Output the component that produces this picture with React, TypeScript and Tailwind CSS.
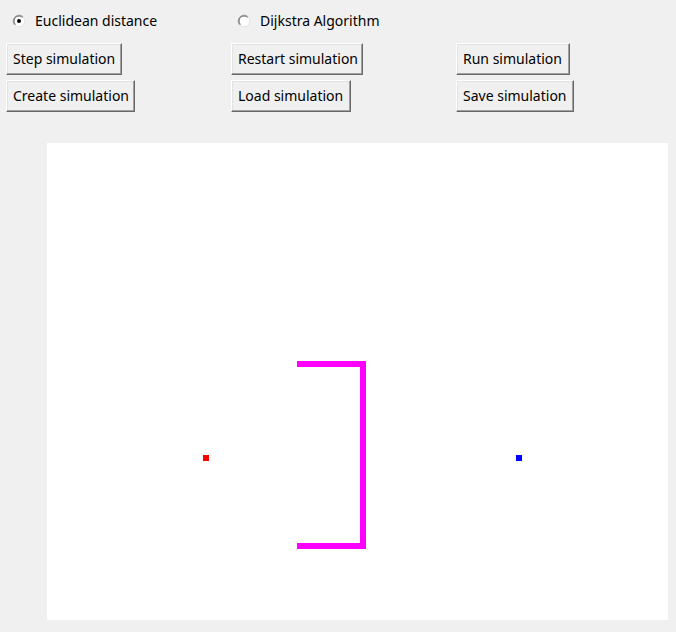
import React from "react";

function Radio({ checked, label }: { checked: boolean; label: string }) {
  return (
    <div className="flex items-center h-[20px]">
      <svg width="14" height="14" viewBox="0 0 14 14" className="ml-[6px] mr-[9px]">
        <circle cx="7" cy="7" r="6" fill="#ffffff" />
        <path d="M2.76 11.24 A6 6 0 0 1 11.24 2.76" fill="none" stroke="#a0a0a0" strokeWidth="1" />
        <path d="M11.24 2.76 A6 6 0 0 1 2.76 11.24" fill="none" stroke="#e3e3e3" strokeWidth="1" />
        <path d="M3.46 10.54 A5 5 0 0 1 10.54 3.46" fill="none" stroke="#696969" strokeWidth="1" />
        {checked && <circle cx="7" cy="7" r="2" fill="#000000" />}
      </svg>
      <span className="text-[14px] text-black leading-none">{label}</span>
    </div>
  );
}

function Btn({ label, w }: { label: string; w: string }) {
  return (
    <button
      className={`${w} h-[32px] bg-[#f0f0f0] text-black text-[14px] text-left pl-[6px] border border-t-white border-l-white border-r-[#696969] border-b-[#696969] shadow-[inset_-1px_-1px_0_#a0a0a0,inset_1px_1px_0_#e3e3e3] leading-none`}
    >
      {label}
    </button>
  );
}

export default function App() {
  return (
    <div
      className="w-[676px] h-[632px] bg-[#f0f0f0] overflow-hidden"
      style={{ fontFamily: '"Noto Sans", "Liberation Sans", sans-serif' }}
    >
      <div className="grid grid-cols-[225px_225px_225px] pl-[6px] pt-[11px]">
        <Radio checked={true} label="Euclidean distance" />
        <Radio checked={false} label="Dijkstra Algorithm" />
        <div />
      </div>
      <div className="grid grid-cols-[225px_225px_225px] pl-[6px] pt-[12px] gap-y-[5px]">
        <div><Btn label="Step simulation" w="w-[116px]" /></div>
        <div><Btn label="Restart simulation" w="w-[132px]" /></div>
        <div><Btn label="Run simulation" w="w-[114px]" /></div>
        <div><Btn label="Create simulation" w="w-[129px]" /></div>
        <div><Btn label="Load simulation" w="w-[120px]" /></div>
        <div><Btn label="Save simulation" w="w-[118px]" /></div>
      </div>
      <div className="ml-[47px] mt-[31px] w-[621px] h-[477px] bg-white">
        <svg width="621" height="477" viewBox="0 0 621 477">
          <path d="M250 221 H316 V403 H250" fill="none" stroke="#ff00ff" strokeWidth="6" />
          <rect x="156" y="312" width="6" height="6" fill="#ff0000" />
          <rect x="469" y="312" width="6" height="6" fill="#0000ff" />
        </svg>
      </div>
    </div>
  );
}
